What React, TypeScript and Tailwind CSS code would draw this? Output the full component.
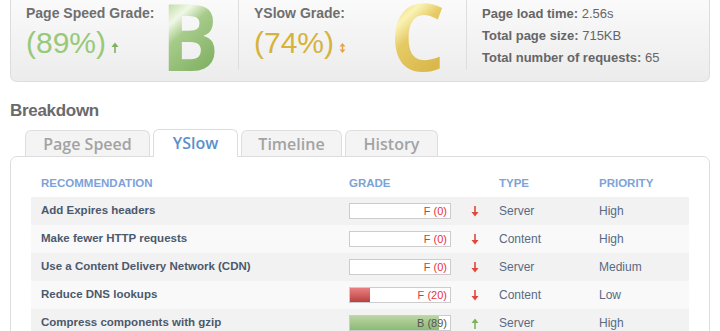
import React from "react";

const arial = { fontFamily: '"Liberation Sans", Arial, sans-serif' };
const open = { fontFamily: '"Open Sans", "Liberation Sans", sans-serif' };

function DownArrow() {
  return (
    <svg width="8" height="11" viewBox="0 0 8 11">
      <path d="M4 0 V9" stroke="#e2463c" strokeWidth="1.6" />
      <path d="M0.5 6 L4 10.5 L7.5 6 Z" fill="#e2463c" />
    </svg>
  );
}
function UpArrow({ color = "#7fb25f" }: { color?: string }) {
  return (
    <svg width="8" height="11" viewBox="0 0 8 11">
      <path d="M4 2 V11" stroke={color} strokeWidth="1.6" />
      <path d="M0.5 5 L4 0.5 L7.5 5 Z" fill={color} />
    </svg>
  );
}
function UpDownArrow() {
  return (
    <svg width="7" height="10" viewBox="0 0 7 10">
      <path d="M3.5 2 V8" stroke="#eba24a" strokeWidth="1.5" />
      <path d="M0.5 3.5 L3.5 0 L6.5 3.5 Z" fill="#eba24a" />
      <path d="M0.5 6.5 L3.5 10 L6.5 6.5 Z" fill="#eba24a" />
    </svg>
  );
}

function GradeLetter({ letter, id, stops }: { letter: string; id: string; stops: [string, string][] }) {
  return (
    <svg width="64" height="72" viewBox="0 0 64 72" className="shrink-0">
      <defs>
        <linearGradient id={id} x1="0" y1="0" x2="0.4" y2="1">
          {stops.map(([o, c]) => (
            <stop key={o} offset={o} stopColor={c} />
          ))}
        </linearGradient>
      </defs>
      <text
        x="0"
        y="70.5"
        fontSize="94"
        fontWeight="700"
        fill={`url(#${id})`}
        transform="scale(0.92,1)"
        style={open}
      >
        {letter}
      </text>
    </svg>
  );
}

type Row = {
  name: string;
  grade: string;
  score: number;
  type: string;
  priority: string;
  good: boolean;
};

const rows: Row[] = [
  { name: "Add Expires headers", grade: "F", score: 0, type: "Server", priority: "High", good: false },
  { name: "Make fewer HTTP requests", grade: "F", score: 0, type: "Content", priority: "High", good: false },
  { name: "Use a Content Delivery Network (CDN)", grade: "F", score: 0, type: "Server", priority: "Medium", good: false },
  { name: "Reduce DNS lookups", grade: "F", score: 20, type: "Content", priority: "Low", good: false },
  { name: "Compress components with gzip", grade: "B", score: 89, type: "Server", priority: "High", good: true },
];

export default function App() {
  return (
    <div className="w-[720px] h-[331px] overflow-hidden bg-white" style={arial}>
      <div className="mx-[10px] w-[700px]">
        {/* Summary box */}
        <div className="flex rounded-b-[7px] border border-t-0 border-[#dddddd] bg-gradient-to-b from-[#fafafa] to-[#ececec] pb-[11px] h-[82px]">
          <div className="flex h-[70px] w-[228px] items-start border-r border-[#dedede]">
            <div className="w-[150px] pl-[15px] pt-[5px]">
              <div className="text-[14px] font-bold leading-[16px] text-[#6f6f6f]">Page Speed Grade:</div>
              <div className="mt-[5px] flex items-end">
                <span className="text-[30px] leading-[34px] text-[#98c978]">(89%)</span>
                <span className="mb-[7px] ml-[5px]"><UpArrow /></span>
              </div>
            </div>
            <GradeLetter
              letter="B"
              id="gradB"
              stops={[["0", "#9fc882"], ["0.3", "#c7e2b0"], ["0.42", "#f0f7e6"], ["0.56", "#a6cb8a"], ["0.92", "#84b366"]]}
            />
          </div>
          <div className="flex h-[70px] w-[228px] items-start border-r border-[#dedede]">
            <div className="w-[151px] pl-[15px] pt-[5px]">
              <div className="text-[14px] font-bold leading-[16px] text-[#6f6f6f]">YSlow Grade:</div>
              <div className="mt-[5px] flex items-end">
                <span className="text-[30px] leading-[34px] text-[#d6b33c]">(74%)</span>
                <span className="mb-[7px] ml-[5px]"><UpDownArrow /></span>
              </div>
            </div>
            <GradeLetter
              letter="C"
              id="gradC"
              stops={[["0", "#ddbd4e"], ["0.3", "#efda80"], ["0.42", "#faf3b6"], ["0.58", "#e6ca64"], ["0.92", "#d9b94c"]]}
            />
          </div>
          <div className="flex flex-col gap-[6px] pl-[15px] pt-[6px] text-[13px] leading-[16px] text-[#666666]">
            <div><span className="font-bold">Page load time:</span> 2.56s</div>
            <div><span className="font-bold">Total page size:</span> 715KB</div>
            <div><span className="font-bold">Total number of requests:</span> 65</div>
          </div>
        </div>

        {/* Breakdown */}
        <div className="mt-[19px] text-[17px] font-bold leading-[20px] tracking-[-0.3px] text-[#6a6a6a]">Breakdown</div>

        <div className="mt-[8px] flex items-end gap-[3px] pl-[15px]" style={open}>
          <div className="relative z-0 flex h-[26px] w-[125px] items-center justify-center rounded-t-[6px] border border-b-0 border-[#dddddd] bg-[#f4f4f4] text-[16px] font-semibold text-[#a3a3a3]">Page Speed</div>
          <div className="relative z-10 -mb-px flex h-[28px] w-[85px] items-center justify-center rounded-t-[6px] border border-b-0 border-[#dddddd] bg-white pb-px text-[16px] font-semibold text-[#5b90cc]">YSlow</div>
          <div className="relative z-0 flex h-[26px] w-[101px] items-center justify-center rounded-t-[6px] border border-b-0 border-[#dddddd] bg-[#f4f4f4] text-[16px] font-semibold text-[#a3a3a3]">Timeline</div>
          <div className="relative z-0 flex h-[26px] w-[93px] items-center justify-center rounded-t-[6px] border border-b-0 border-[#dddddd] bg-[#f4f4f4] text-[16px] font-semibold text-[#a3a3a3]">History</div>
        </div>

        {/* Panel */}
        <div className="h-[200px] rounded-t-[7px] border border-[#dddddd] bg-white px-[20px]">
          <div className="grid h-[40px] grid-cols-[308px_150px_100px_100px] pt-[19px] text-[11.5px] font-bold uppercase leading-[14px] text-[#7da2d8]">
            <div className="pl-[10px]">Recommendation</div>
            <div className="pl-[10px]">Grade</div>
            <div className="pl-[10px]">Type</div>
            <div className="pl-[10px]">Priority</div>
          </div>
          {rows.map((r, i) => (
            <div
              key={r.name}
              className={`grid h-[28px] grid-cols-[308px_120px_30px_100px_100px] items-center ${i % 2 === 0 ? "bg-[#f2f2f2]" : "bg-[#f9f9f9]"}`}
            >
              <div className="pl-[10px] text-[11.5px] font-bold text-[#4b596d]">{r.name}</div>
              <div className="pl-[10px]">
                <div className="relative h-[16px] w-[102px] border border-[#cccccc] bg-white">
                  {r.score > 0 && (
                    <div
                      className={`absolute left-0 top-0 h-full ${r.good ? "bg-gradient-to-b from-[#bad5a4] to-[#8db977]" : "bg-gradient-to-b from-[#ea8080] to-[#b9403f]"}`}
                      style={{ width: `${r.score}%` }}
                    />
                  )}
                  <div className={`absolute right-[3px] top-0 text-[11px] leading-[14px] ${r.good ? "text-[#555555]" : "text-[#e8333a]"}`}>
                    {r.grade} ({r.score})
                  </div>
                </div>
              </div>
              <div className="flex justify-center pl-[2px]">{r.good ? <UpArrow /> : <DownArrow />}</div>
              <div className="pl-[10px] text-[12px] text-[#5a6a82]">{r.type}</div>
              <div className="pl-[10px] text-[12px] text-[#5a6a82]">{r.priority}</div>
            </div>
          ))}
        </div>
      </div>
    </div>
  );
}
